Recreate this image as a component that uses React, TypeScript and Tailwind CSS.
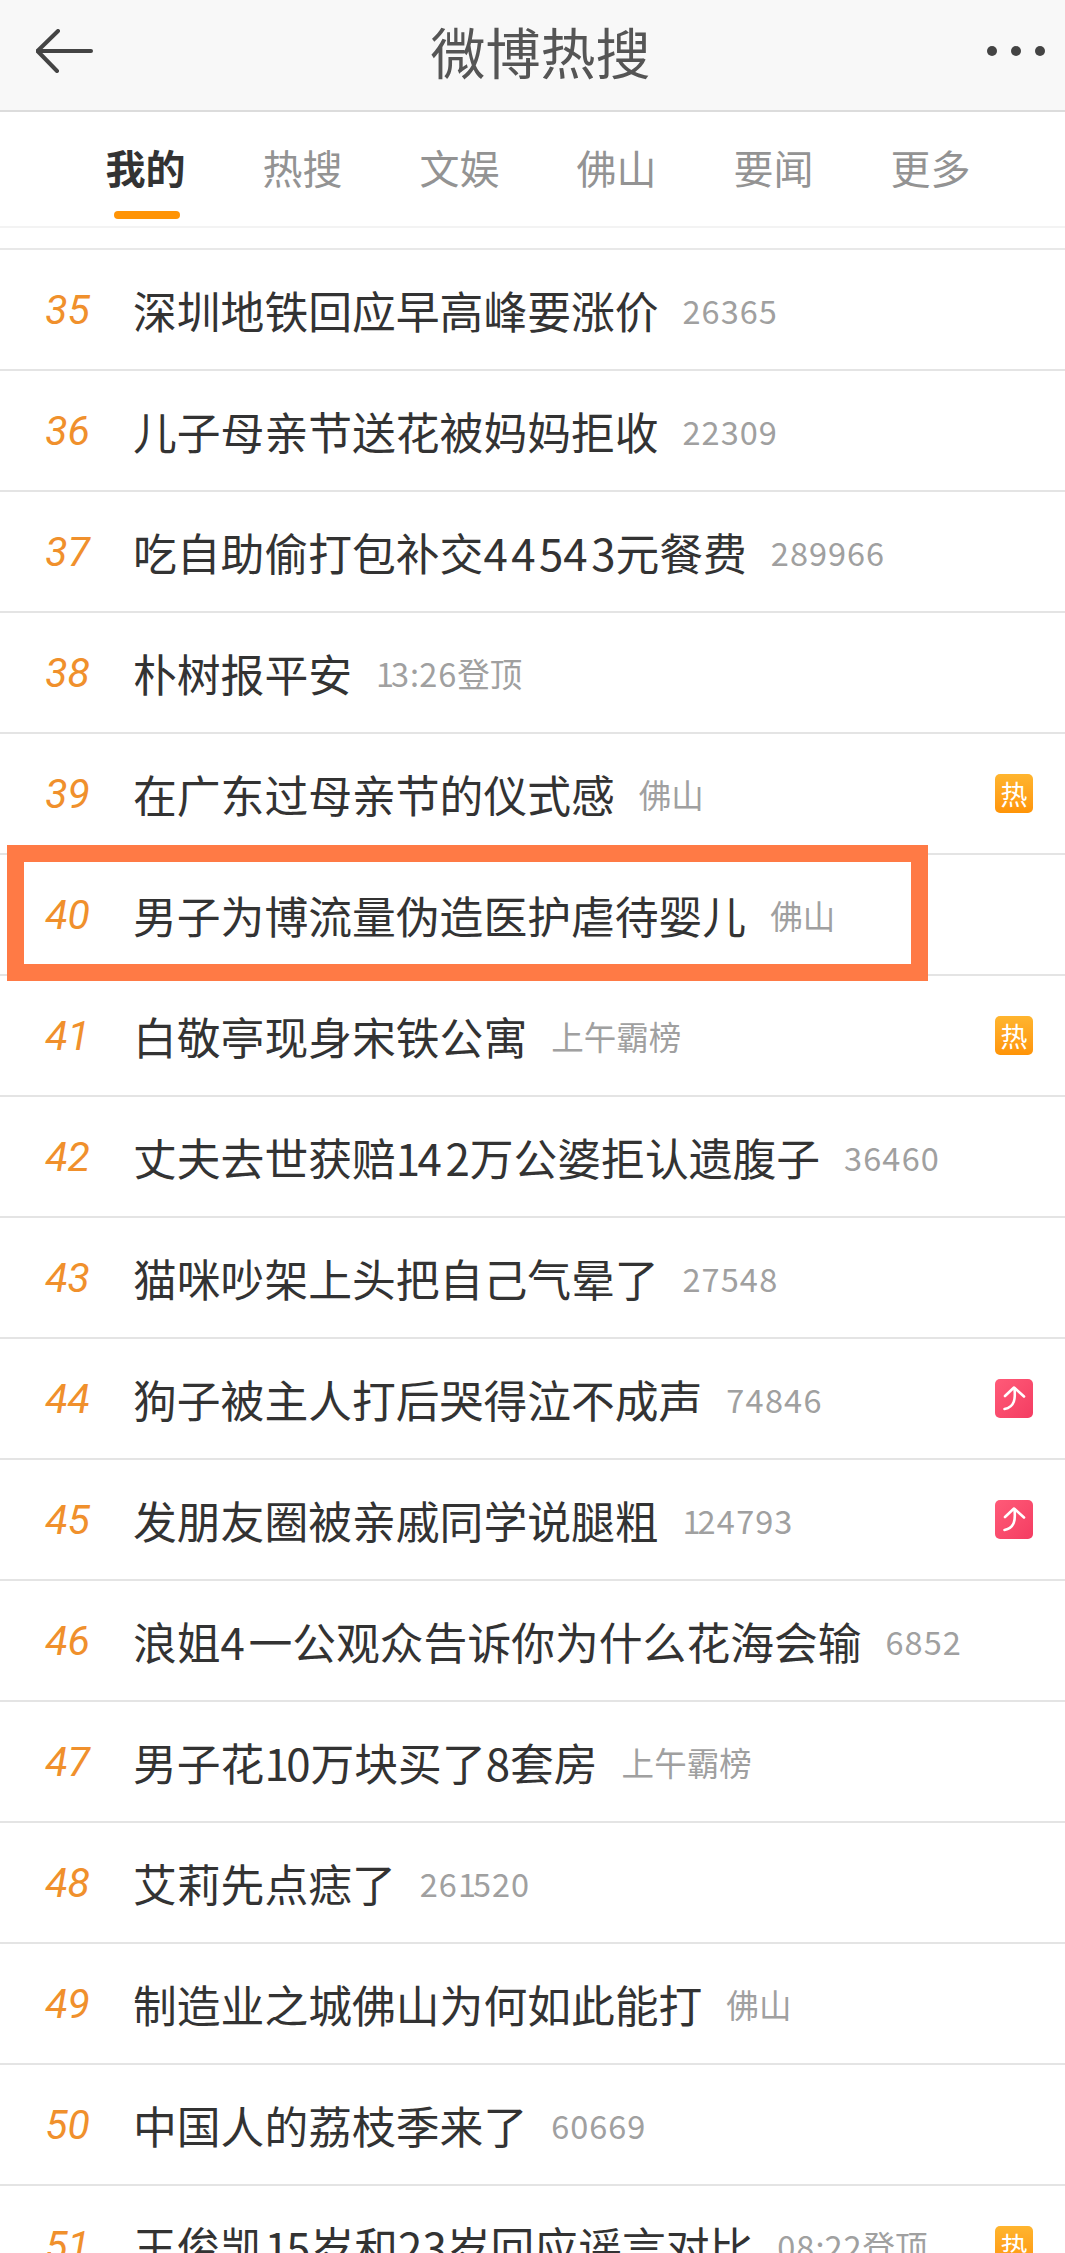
const rows: { n: number; t: string; m: string; b?: "hot" | "up" }[] = [
  { n: 35, t: "深圳地铁回应早高峰要涨价", m: "26365" },
  { n: 36, t: "儿子母亲节送花被妈妈拒收", m: "22309" },
  { n: 37, t: "吃自助偷打包补交44543元餐费", m: "289966" },
  { n: 38, t: "朴树报平安", m: "13:26登顶" },
  { n: 39, t: "在广东过母亲节的仪式感", m: "佛山", b: "hot" },
  { n: 40, t: "男子为博流量伪造医护虐待婴儿", m: "佛山" },
  { n: 41, t: "白敬亭现身宋铁公寓", m: "上午霸榜", b: "hot" },
  { n: 42, t: "丈夫去世获赔142万公婆拒认遗腹子", m: "36460" },
  { n: 43, t: "猫咪吵架上头把自己气晕了", m: "27548" },
  { n: 44, t: "狗子被主人打后哭得泣不成声", m: "74846", b: "up" },
  { n: 45, t: "发朋友圈被亲戚同学说腿粗", m: "124793", b: "up" },
  { n: 46, t: "浪姐4一公观众告诉你为什么花海会输", m: "6852" },
  { n: 47, t: "男子花10万块买了8套房", m: "上午霸榜" },
  { n: 48, t: "艾莉先点痣了", m: "261520" },
  { n: 49, t: "制造业之城佛山为何如此能打", m: "佛山" },
  { n: 50, t: "中国人的荔枝季来了", m: "60669" },
  { n: 51, t: "王俊凯15岁和23岁回应谣言对比", m: "08:22登顶", b: "hot" },
];

const tabs = ["我的", "热搜", "文娱", "佛山", "要闻", "更多"];

/* The reference font has proportional figures: a wide 4 and a narrow 1. */
function Figures({ text, wide, narrow, other }: { text: string; wide: string; narrow: string; other: string }) {
  return (
    <>
      {Array.from(text).map((c, i) => {
        if (c === "4") return <span key={i} className={wide}>{c}</span>;
        if (c === "1") return <span key={i} className={narrow}>{c}</span>;
        if (c >= "0" && c <= "9") return <span key={i} className={other}>{c}</span>;
        return c;
      })}
    </>
  );
}

function Badge({ kind }: { kind: "hot" | "up" }) {
  if (kind === "hot") {
    return (
      <div className="w-[38px] h-[39px] rounded-[5px] bg-gradient-to-b from-[#ffb52e] to-[#ff9406] flex items-center justify-center text-white text-[27px] leading-none">
        热
      </div>
    );
  }
  return (
    <div className="w-[38px] h-[39px] rounded-[5px] bg-gradient-to-br from-[#ff5a78] to-[#f43c62] flex items-center justify-center">
      <svg width="38" height="39" viewBox="0 0 38 39" fill="none" stroke="#fff" strokeWidth="2.6" strokeLinecap="round" strokeLinejoin="round">
        <path d="M10 17 L19 8.5 L29 17.5" />
        <path d="M19.5 9.5 C20.5 19 20 28 9.5 30" />
      </svg>
    </div>
  );
}

export default function App() {
  return (
    <div className="relative h-[2253px] w-[1065px] overflow-hidden bg-white font-['Noto_Sans_CJK_SC','Noto_Sans',sans-serif] text-[#333]">
      <header className="relative h-[112px] bg-[#f8f8f8] border-b-2 border-[#dcdcdc] flex items-center justify-center pl-[16px]">
        <svg className="absolute left-[36px] top-[29px]" width="58" height="44" viewBox="0 0 58 44" fill="none" stroke="#444" strokeWidth="4" strokeLinecap="round" strokeLinejoin="round">
          <path d="M22 2 L1.5 22 L21 42" />
          <path d="M2 22 H55" />
        </svg>
        <h1 className="text-[55px] leading-none font-normal text-[#555] -mt-[10px]">微博热搜</h1>
        <div className="absolute right-[20px] top-[46px] flex gap-[14px]">
          <span className="w-[10px] h-[10px] rounded-full bg-[#444]" />
          <span className="w-[10px] h-[10px] rounded-full bg-[#444]" />
          <span className="w-[10px] h-[10px] rounded-full bg-[#444]" />
        </div>
      </header>

      <nav className="relative h-[116px] border-b-2 border-[#f3f3f3] flex pl-[67px]">
        {tabs.map((t, i) => (
          <div key={t} className="relative w-[157px] flex justify-center pt-[32px]">
            <span className={i === 0 ? "text-[40px] leading-[46px] font-bold text-[#333]" : "text-[40px] leading-[46px] text-[#939393]"}>{t}</span>
            {i === 0 && <span className="absolute left-[47px] top-[99px] w-[66px] h-[8px] rounded-full bg-[#ff9406]" />}
          </div>
        ))}
      </nav>

      <main className="mt-[20px] border-t-2 border-[#e8e8e8]">
        {rows.map((r) => (
          <div key={r.n} className="relative h-[121px] border-b-2 border-[#e4e4e4] flex items-center">
            <span className="w-[133px] pl-[2px] pt-[2px] text-center italic text-[41px] leading-none text-[#f0902c] font-['Roboto',sans-serif]">{r.n}</span>
            <span className="text-[43.8px] leading-[60px] whitespace-nowrap text-[#333]">
              <Figures text={r.t} wide="tracking-[3.5px]" narrow="tracking-[-2.5px]" other="" />
            </span>
            <span className="ml-[24px] text-[32.5px] leading-[44px] whitespace-nowrap text-[#a0a0a0]">
              <Figures text={r.m} wide="tracking-[1.5px]" narrow="tracking-[-3px]" other="tracking-[1px]" />
            </span>
            {r.b && (
              <div className="absolute left-[995px] top-[40px]">
                <Badge kind={r.b} />
              </div>
            )}
          </div>
        ))}
      </main>

      <div className="absolute left-[7px] top-[845px] w-[921px] h-[136px] border-[17px] border-[#ff7a45]" />
    </div>
  );
}
